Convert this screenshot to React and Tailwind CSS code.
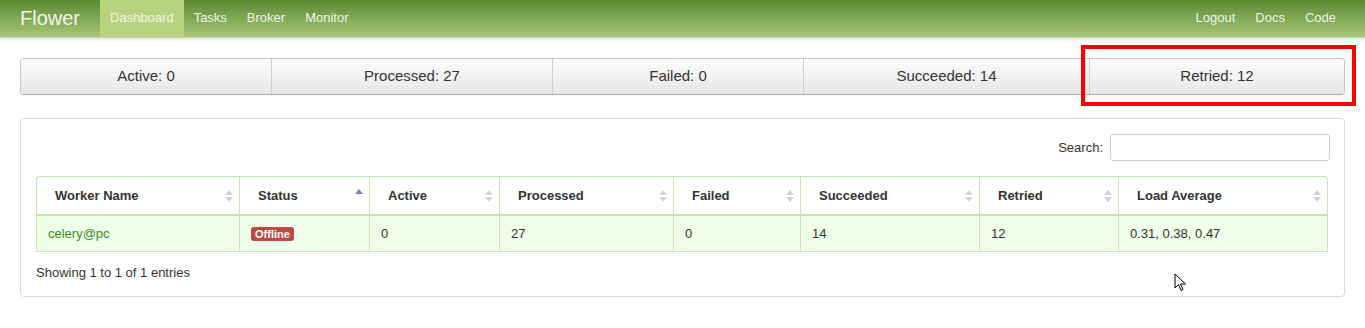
import React from "react";

const stats = [
  { label: "Active: 0", w: "w-[250px]" },
  { label: "Processed: 27", w: "w-[281px]" },
  { label: "Failed: 0", w: "w-[251px]" },
  { label: "Succeeded: 14", w: "w-[286px]" },
  { label: "Retried: 12", w: "flex-1" },
];

const cols = [
  { name: "Worker Name", w: "w-[203px]" },
  { name: "Status", w: "w-[130px]", active: true },
  { name: "Active", w: "w-[130px]" },
  { name: "Processed", w: "w-[174px]" },
  { name: "Failed", w: "w-[127px]" },
  { name: "Succeeded", w: "w-[179px]" },
  { name: "Retried", w: "w-[139px]" },
  { name: "Load Average", w: "w-[210px]" },
];

function SortIcon({ active }) {
  if (active) {
    return (
      <svg width="8" height="14" viewBox="0 0 8 14" className="absolute right-[6px] top-[11px]">
        <path d="M0 6 L4 1 L8 6 Z" fill="#7b7fd4" />
      </svg>
    );
  }
  return (
    <svg width="8" height="16" viewBox="0 0 8 16" className="absolute right-[6px] top-[11px]">
      <path d="M0 7 L4 2 L8 7 Z" fill="#d4d4d4" />
      <path d="M0 9 L4 14 L8 9 Z" fill="#d4d4d4" />
    </svg>
  );
}

export default function App() {
  const row = ["celery@pc", "Offline", "0", "27", "0", "14", "12", "0.31, 0.38, 0.47"];
  return (
    <div className="relative w-[1365px] h-[328px] bg-white text-[#333] overflow-hidden" style={{ fontFamily: '"Liberation Sans", Arial, sans-serif' }}>
      {/* navbar */}
      <div className="h-[38px] flex items-stretch bg-gradient-to-b from-[#5b8b32] to-[#a6c777] shadow-[0_1px_4px_rgba(0,0,0,0.15)] border-b border-[#c3d99e]">
        <div className="pl-5 pr-5 pb-[2px] flex items-center text-[20px] text-[#f2f5ee]">Flower</div>
        <div className="flex items-stretch text-[13px] text-[#eef3ea]">
          <div className="px-[10px] pb-[2px] flex items-center bg-[#b7d37d]">Dashboard</div>
          <div className="px-[10px] pb-[2px] flex items-center">Tasks</div>
          <div className="px-[10px] pb-[2px] flex items-center">Broker</div>
          <div className="px-[10px] pb-[2px] flex items-center">Monitor</div>
        </div>
        <div className="ml-auto flex items-stretch text-[13px] text-[#eef3ea] pr-[19px]">
          <div className="px-[10px] pb-[2px] flex items-center">Logout</div>
          <div className="px-[10px] pb-[2px] flex items-center">Docs</div>
          <div className="px-[10px] pb-[2px] flex items-center">Code</div>
        </div>
      </div>

      <div className="px-5">
        {/* stats */}
        <div className="mt-[20px] h-[37px] flex rounded-[4px] border border-[#c8c8c8] border-b-[#b3b3b3] overflow-hidden shadow-[0_1px_2px_rgba(0,0,0,0.05)]">
          {stats.map((s, i) => (
            <div
              key={s.label}
              className={`${s.w} flex items-center justify-center text-[15px] text-[#333] bg-gradient-to-b from-[#fdfdfd] to-[#e6e6e6] ${i > 0 ? "border-l border-[#cfcfcf]" : ""}`}
            >
              {s.label}
            </div>
          ))}
        </div>

        {/* panel */}
        <div className="mt-[23px] h-[179px] border border-[#dcdcdc] rounded-[4px] pt-[15px] pl-[15px] pr-[16px]">
          <div className="flex items-center justify-end gap-[7px] text-[13px]">
            <span>Search:</span>
            <div className="w-[220px] h-[27px] border border-[#cccccc] rounded-[3px] mr-[-2px]" />
          </div>
          <table className="mt-[15px] table-fixed border-separate border-spacing-0 text-[13px] w-[1292px]">
            <thead>
              <tr>
                {cols.map((c, i) => (
                  <th
                    key={c.name}
                    className={`${c.w} relative h-[40px] text-left font-bold pl-[18px] border-t border-b-2 border-[#c5e8b2] ${i === 0 ? "border-l rounded-tl-[4px]" : "border-l"} ${i === cols.length - 1 ? "border-r rounded-tr-[4px]" : ""}`}
                  >
                    {c.name}
                    <SortIcon active={c.active} />
                  </th>
                ))}
              </tr>
            </thead>
            <tbody>
              <tr>
                {row.map((v, i) => (
                  <td
                    key={i}
                    className={`h-[36px] pl-[11px] bg-[#effee9] border-b border-l border-[#c5e8b2] ${i === row.length - 1 ? "border-r" : ""}`}
                  >
                    {i === 0 ? (
                      <span className="text-[#3c8a1c]">{v}</span>
                    ) : i === 1 ? (
                      <span className="inline-block bg-[#b94a48] text-white font-bold text-[11px] leading-[14px] px-[4px] rounded-[3px]">{v}</span>
                    ) : (
                      v
                    )}
                  </td>
                ))}
              </tr>
            </tbody>
          </table>
          <div className="mt-[11px] text-[13px]">Showing 1 to 1 of 1 entries</div>
        </div>
      </div>

      {/* highlight overlay */}
      <div className="absolute left-[1081px] top-[45px] w-[275px] h-[61px] border-[4px] border-[#ff0000]" />

      {/* mouse cursor */}
      <svg className="absolute left-[1174px] top-[273px]" width="13" height="20" viewBox="0 0 13 20">
        <path d="M1 1 L1 15 L4.5 11.5 L7 17.5 L9 16.6 L6.6 11 L11.5 11 Z" fill="#fff" stroke="#000" strokeWidth="1" strokeLinejoin="round" />
      </svg>
    </div>
  );
}
